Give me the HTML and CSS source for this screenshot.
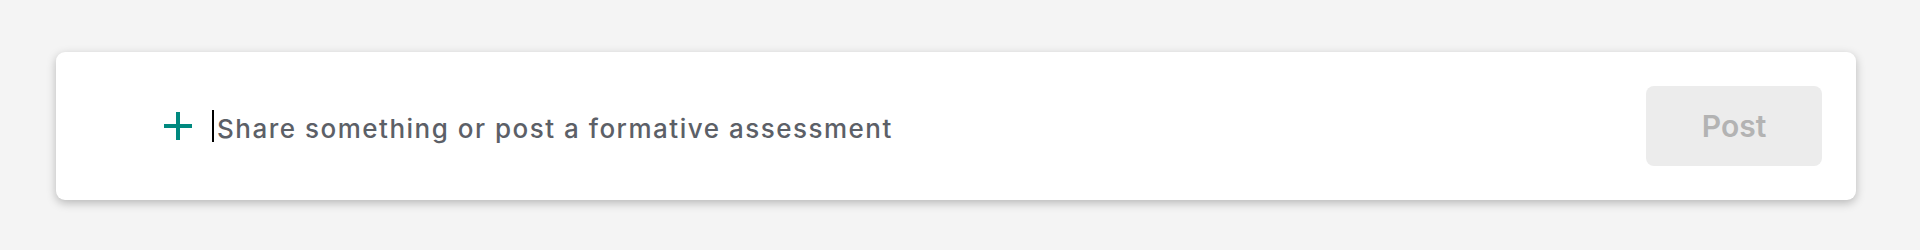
FILE: index.html
```html
<!DOCTYPE html>
<html lang="en">
<head>
<meta charset="utf-8">
<title>Composer</title>
<link rel="stylesheet" href="styles.css">
</head>
<body>
<div class="page">
  <div class="composer">
    <button class="add" aria-label="Add">
      <svg width="28" height="28" viewBox="0 0 28 28"><path d="M14 0v28M0 14h28" stroke="#00897f" stroke-width="4" fill="none"/></svg>
    </button>
    <div class="field">
      <span class="caret"></span>
      <span class="placeholder">Share something or post a formative assessment</span>
    </div>
    <button class="post" disabled>Post</button>
  </div>
</div>
</body>
</html>
```

FILE: styles.css
```css
html, body {
  margin: 0;
  padding: 0;
  background: #f4f4f4;
}
.page {
  padding: 52px 64px 50px 56px;
}
.composer {
  display: flex;
  align-items: center;
  background: #ffffff;
  border-radius: 9px;
  box-shadow: 0 3px 10px rgba(0, 0, 0, 0.25);
  padding: 34px 34px 34px 108px;
  height: 80px;
}
.add {
  display: flex;
  border: none;
  background: none;
  padding: 0;
  width: 28px;
  height: 28px;
  margin-right: 20px;
}
.field {
  flex: 1;
  display: flex;
  align-items: center;
}
.caret {
  width: 2px;
  height: 32px;
  background: #000;
  margin-right: 3px;
}
.placeholder {
  font-family: Inter, sans-serif;
  font-size: 26px;
  font-weight: 500;
  letter-spacing: 1.5px;
  color: #5c6067;
  padding-top: 4px;
}
.post {
  width: 176px;
  height: 80px;
  border: none;
  border-radius: 8px;
  background: #ececec;
  color: #b3b3b3;
  font-family: Inter, sans-serif;
  font-size: 30px;
  font-weight: 600;
  padding: 0;
}
```
